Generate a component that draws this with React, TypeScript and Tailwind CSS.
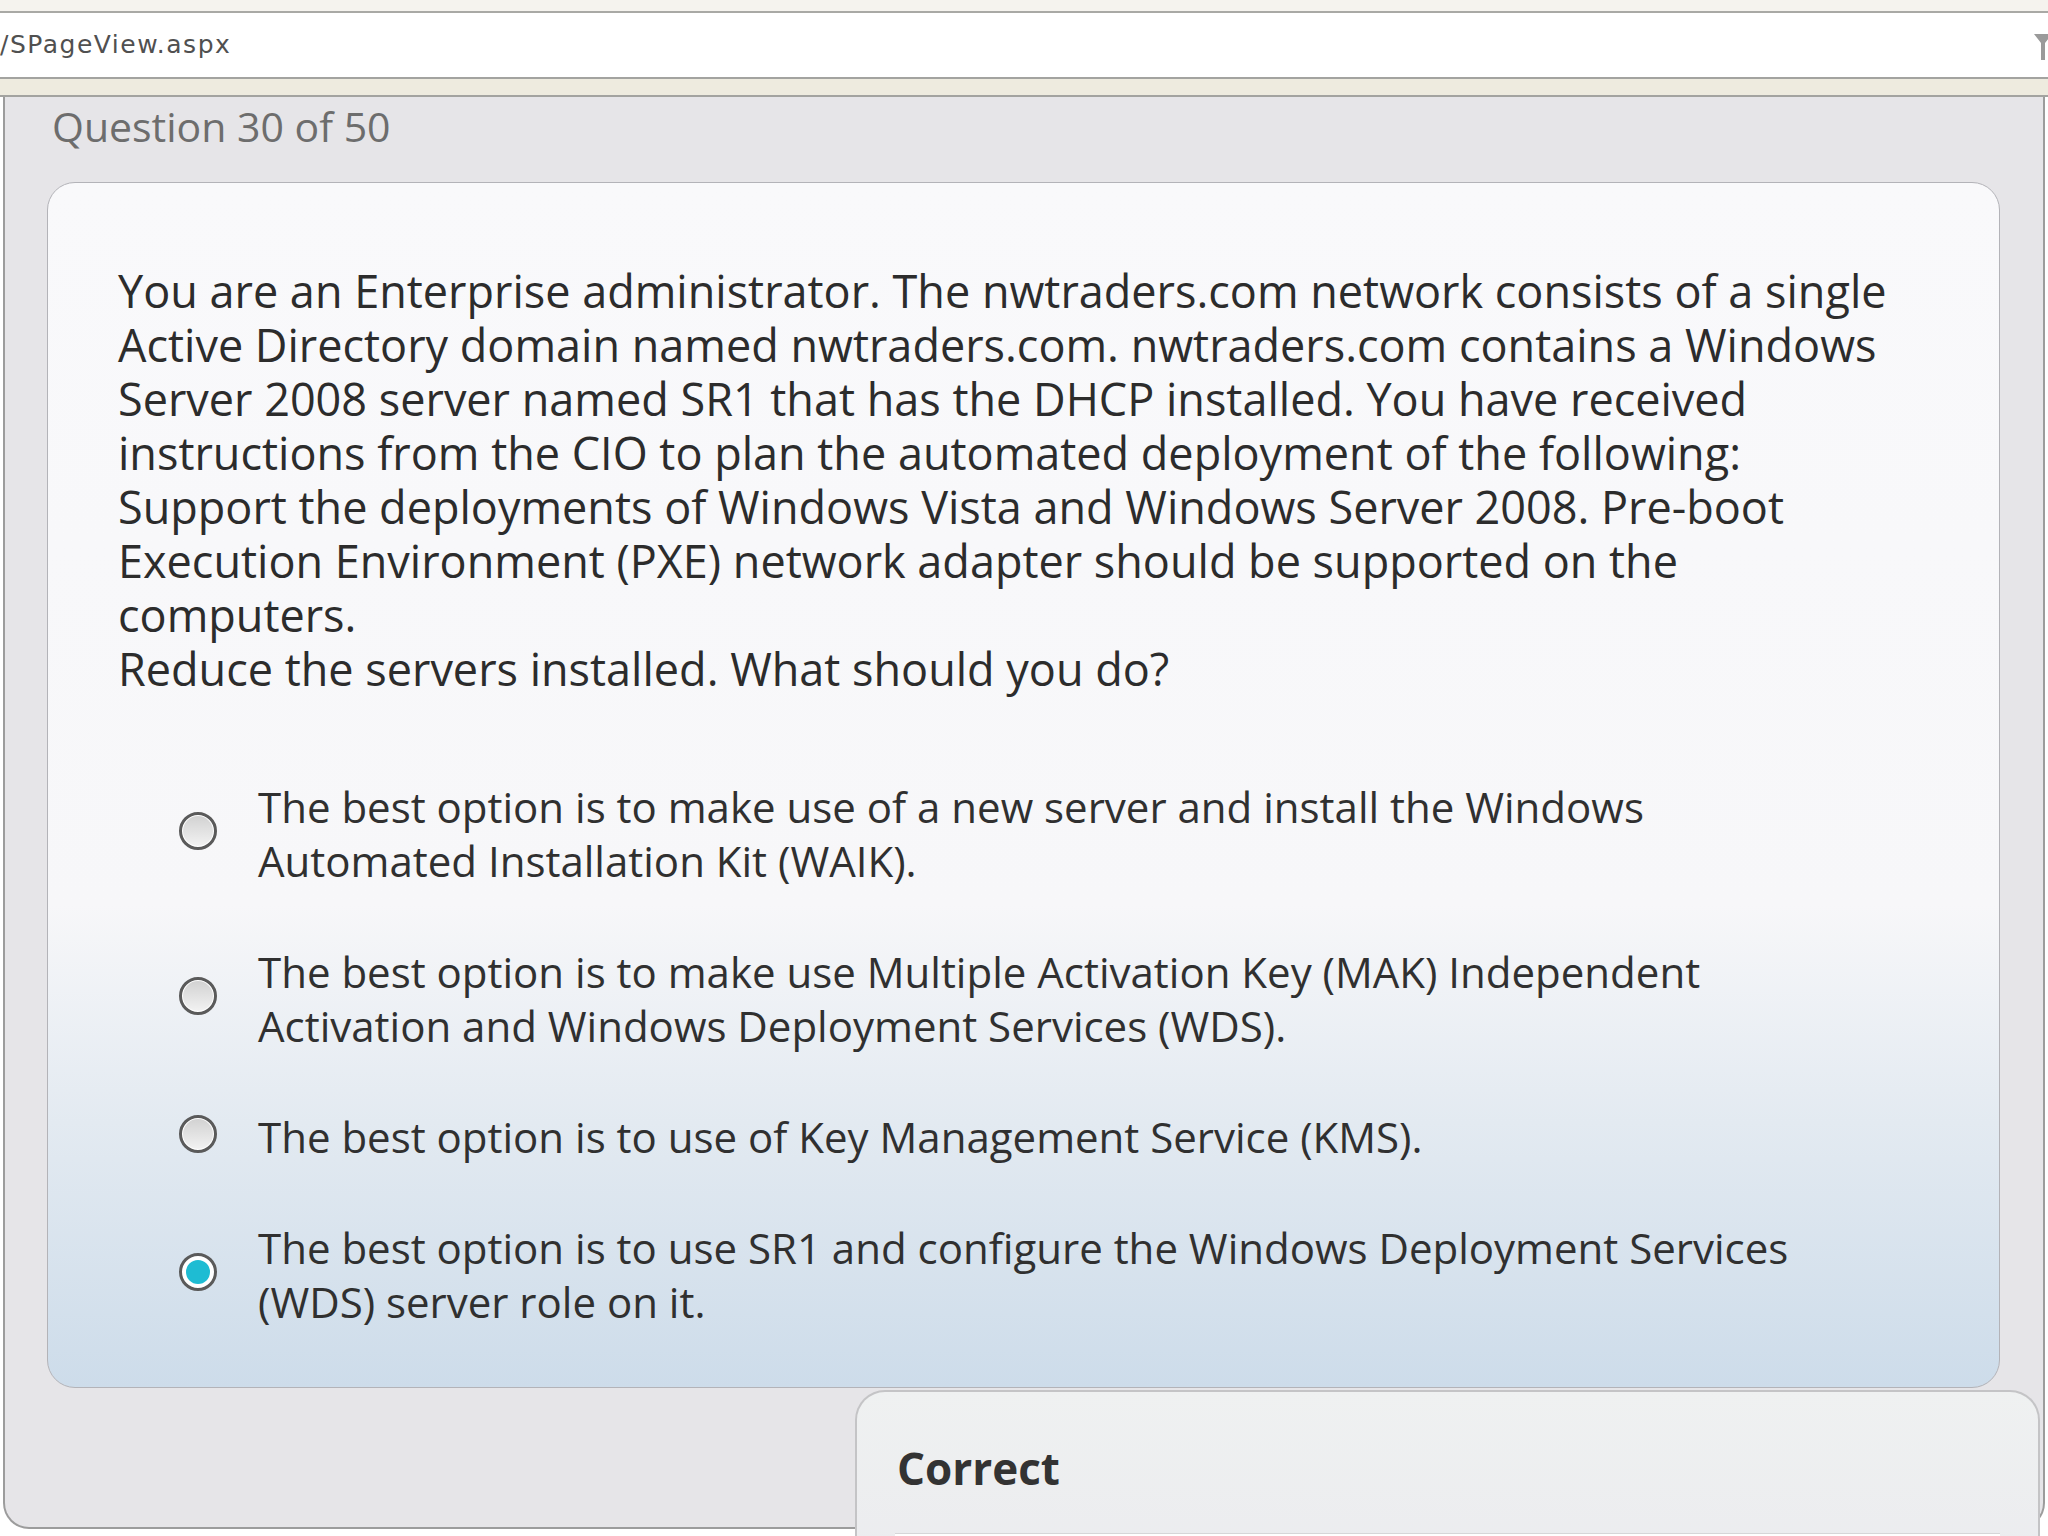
import { FC } from "react";

const questionLines = [
  "You are an Enterprise administrator. The nwtraders.com network consists of a single",
  "Active Directory domain named nwtraders.com. nwtraders.com contains a Windows",
  "Server 2008 server named SR1 that has the DHCP installed. You have received",
  "instructions from the CIO to plan the automated deployment of the following:",
  "Support the deployments of Windows Vista and Windows Server 2008. Pre-boot",
  "Execution Environment (PXE) network adapter should be supported on the",
  "computers.",
  "Reduce the servers installed. What should you do?",
];

const options: { lines: string[]; selected?: boolean }[] = [
  {
    lines: [
      "The best option is to make use of a new server and install the Windows",
      "Automated Installation Kit (WAIK).",
    ],
  },
  {
    lines: [
      "The best option is to make use Multiple Activation Key (MAK) Independent",
      "Activation and Windows Deployment Services (WDS).",
    ],
  },
  {
    lines: ["The best option is to use of Key Management Service (KMS)."],
  },
  {
    lines: [
      "The best option is to use SR1 and configure the Windows Deployment Services",
      "(WDS) server role on it.",
    ],
    selected: true,
  },
];

const Radio: FC<{ selected?: boolean }> = ({ selected }) => (
  <div className="flex h-[38px] w-[38px] shrink-0 items-center justify-center rounded-full border-[3px] border-[#5a5a5a] bg-white">
    {selected ? (
      <div className="h-[24px] w-[24px] rounded-full bg-[#1ebcd3]" />
    ) : (
      <div className="h-[30px] w-[30px] rounded-full bg-gradient-to-b from-[#d2d2d2] to-[#f2f2f2]" />
    )}
  </div>
);

const App: FC = () => {
  return (
    <div className="h-[1536px] w-[2048px] overflow-hidden bg-white font-['Open_Sans',sans-serif]">
      {/* browser chrome */}
      <div className="h-[13px] border-b-2 border-[#a9a9a5] bg-[#f5f3ee]" />
      <div className="flex h-[64px] items-center justify-between overflow-hidden bg-white">
        <span className="font-['DejaVu_Sans',sans-serif] text-[25px] tracking-[1.5px] text-[#505050]">
          /SPageView.aspx
        </span>
        <svg width="18" height="30" viewBox="0 0 18 30" className="-mr-[4px]">
          <path d="M0 4 L18 4 L11 13 L11 30 L7 30 L7 13 Z" fill="#9a9a9a" />
        </svg>
      </div>
      <div className="h-[20px] border-y-2 border-[#a3a3a0] bg-[#eeebdf]" />

      {/* quiz panel */}
      <div className="ml-[3px] flex h-[1432px] w-[2042px] flex-col rounded-b-[26px] border-x-2 border-b-2 border-[#9c9c9c] bg-[#e6e5e8] pl-[42px] pr-[43px]">
        <div className="h-[85px] shrink-0 pl-[5px] pt-[8px] text-[41px] leading-[42px] text-[#6d6d6d]">
          Question 30 of 50
        </div>

        <div className="h-[1206px] shrink-0 rounded-[28px] border border-[#b3b3b8] bg-[linear-gradient(to_bottom,#f9f9fb_0%,#f7f7f9_60%,#e3eaf1_78%,#cddcea_100%)] pl-[70px] pt-[81px]">
          <div className="text-[45px] leading-[54px] text-[#2c2c2c]">
            {questionLines.map((l) => (
              <div key={l} className="whitespace-nowrap">
                {l}
              </div>
            ))}
          </div>

          <div className="mt-[84px] flex flex-col gap-[57px] pl-[61px]">
            {options.map((o, i) => (
              <div key={i} className="flex items-center gap-[41px]">
                <div className="-mt-[6px]">
                  <Radio selected={o.selected} />
                </div>
                <div className="text-[42px] leading-[54px] text-[#303030]">
                  {o.lines.map((l) => (
                    <div key={l} className="whitespace-nowrap">
                      {l}
                    </div>
                  ))}
                </div>
              </div>
            ))}
          </div>
        </div>

        <div className="-mr-[40px] mt-[2px] flex shrink-0 justify-end">
          <div className="h-[230px] w-[1185px] shrink-0 rounded-t-[30px] border-l-2 border-r-2 border-t-2 border-[#c4c4c6] bg-gradient-to-b from-[#eff1f1] to-[#eaeaee] pl-[40px] pt-[51px]">
            <div className="text-[44px] font-bold leading-[50px] text-[#333333]">
              Correct
            </div>
            <div className="ml-[-2px] mr-[38px] mt-[40px] h-[80px] border-t border-[#d6d6d8] bg-white" />
          </div>
        </div>
      </div>
    </div>
  );
};

export default App;
